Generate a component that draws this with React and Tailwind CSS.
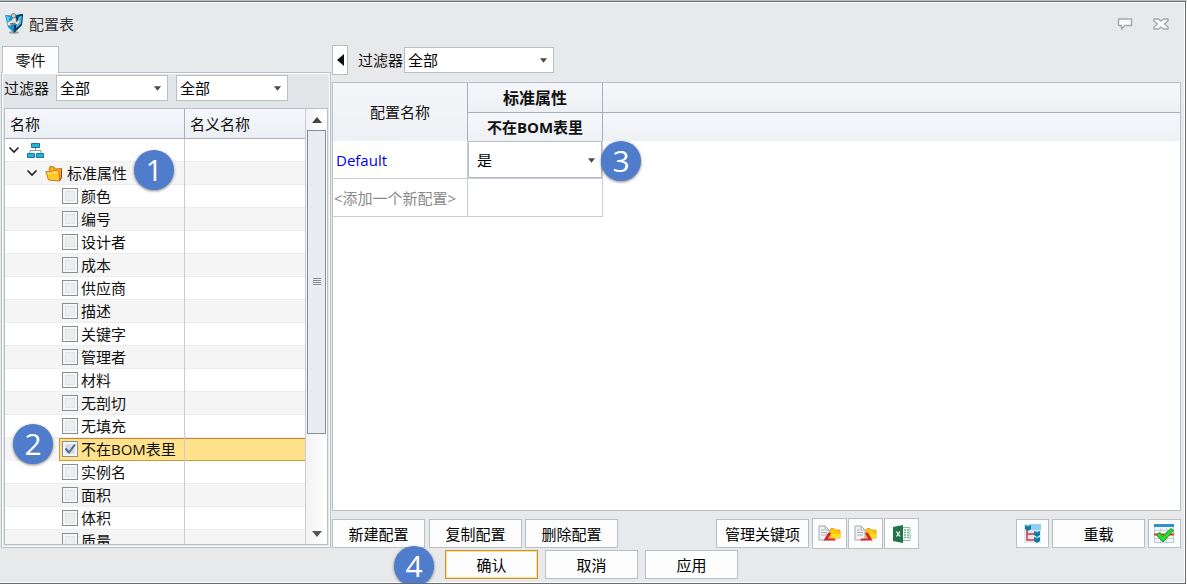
import { useState } from 'react';
import clsx from 'clsx';

const FONT = "font-['Open_Sans','Noto_Sans_CJK_SC',sans-serif]";

const ATRIBUTOS = [
  '颜色', '编号', '设计者', '成本', '供应商', '描述', '关键字', '管理者',
  '材料', '无剖切', '无填充', '不在BOM表里', '实例名', '面积', '体积', '质量',
];

function Badge({ children, className }) {
  return (
    <span className={clsx('absolute z-10 flex h-10 w-10 items-center justify-center rounded-full bg-[#4f7ccb] text-[30px] leading-none text-white shadow-[0_1px_3px_rgba(0,0,0,0.5)]', className)}>
      {children}
    </span>
  );
}

function Dropdown({ id, label, options, className, selectClass }) {
  return (
    <div className={clsx('relative', className)}>
      <select id={id} aria-label={label} className={clsx('h-full w-full appearance-none border border-[#b9bfc7] bg-white text-[15px] leading-5 text-black outline-none', selectClass)}>
        {options.map((o) => <option key={o}>{o}</option>)}
      </select>
      <svg className="pointer-events-none absolute right-[7px] top-1/2 -mt-0.5 h-[5px] w-[7px]" viewBox="0 0 8 5">
        <path d="M0 0h8L4 5z" fill="#4a4a4a" />
      </svg>
    </div>
  );
}

function PushButton({ children, className }) {
  return (
    <button className={clsx('h-[29px] w-[93px] border bg-[#fdfdfd] text-[15px] leading-5 text-black', className || 'border-[#b9bfc7]')}>
      {children}
    </button>
  );
}

function IconButton({ label, className, children }) {
  return (
    <button aria-label={label} className={clsx('flex items-center justify-center border border-[#b9bfc7] bg-[#fdfdfd]', className)}>
      {children}
    </button>
  );
}

/* ÍCONES */
function AppLogo() {
  return (
    <svg width="19" height="21" viewBox="0 0 19 21">
      <ellipse cx="9" cy="19.5" rx="5" ry="1.2" fill="#9aa0a5" />
      <path d="M0 2l6 .5L18 1l-1 11-8 8-6-6z" fill="#1590cc" />
      <path d="M12 2l6-1-1 11-8 8V9z" fill="#0b3a5c" />
      <path d="M14 3.500l3-.5-1 8-5 4v-4z" fill="#38c4f2" />
      <path d="M1 3l4 1-2 6z" fill="#58d0f5" />
      <path d="M3 9l4-2 1-3 3 1v4l5-3-3 6-5-1-4 2-2-2z" fill="#e5e8ea" stroke="#7c868e" strokeWidth=".6" />
      <path d="M5 11l4-1 3 2" fill="none" stroke="#51606b" />
      <circle cx="8.5" cy="2.800" r="2.200" fill="#c9cdd0" stroke="#606870" strokeWidth=".8" />
    </svg>
  );
}

function Chevron() {
  return (
    <svg width="12" height="8" viewBox="0 0 12 8" className="shrink-0">
      <path d="M1.500 1.500L6 6l4.500-4.500" fill="none" stroke="#222" strokeWidth="1.600" />
    </svg>
  );
}

function TreeRootIcon() {
  return (
    <svg width="19" height="17" viewBox="0 0 19 17" className="shrink-0">
      <path d="M9.500 6v3M4 11V8.500h11V11" fill="none" stroke="#8d9ca6" />
      <g fill="#23b3da" stroke="#167698">
        <path d="M5.500 1.500h8v4h-8zM1.500 11.500h7v4h-7zM10.500 11.500h7v4h-7z" />
      </g>
    </svg>
  );
}

function FolderIcon() {
  return (
    <svg width="18" height="17" viewBox="0 0 18 17" className="shrink-0">
      <path d="M4 5l1-3.500 4 .5 1 2 6.500-.5-.5 10-2 2z" fill="#f5b120" stroke="#c07a1c" />
      <path d="M.8 6.500L6 7l1.500-1.500L14 6l.5 10L3.500 15z" fill="#ffc928" stroke="#cf7a1f" />
      <path d="M2.500 8l4 .3L8 7l5 .3" fill="none" stroke="#ffeb8a" />
      <path d="M14.500 16l2-3.500V4" fill="none" stroke="#a83a20" />
    </svg>
  );
}

function FolderDocIcon({ flip }) {
  return (
    <svg width="23" height="17" viewBox="0 0 23 17">
      <path d="M1 1h6l4 4v10H1z" fill="#f1f2f3" stroke="#a4a8ac" />
      <path d="M7 1v4h4M3 5h3M3 7.500h6M3 10h6" fill="none" stroke="#aeb2b6" />
      <path d="M12 5l1-1.500h3l1 1.500h5v8H12z" fill="#fbc81a" stroke="#e9a510" />
      <path d="M13 9h9v4h-9z" fill="#ffe11a" />
      {flip
        ? <path d="M11 8l3-.5 4.500 8H6l1.500-2H14z" fill="#d8222c" />
        : <path d="M12 7.500l-2 .5-4.500 7.500H18l-1.500-2H10l3-5z" fill="#d8222c" />}
    </svg>
  );
}

function ExcelIcon() {
  return (
    <svg width="19" height="18" viewBox="0 0 19 18">
      <path d="M10 2.500h8v13h-8z" fill="#fff" stroke="#8fbda3" />
      <path d="M12 5h2M15 5h2M12 7.500h2M15 7.500h2M12 10h2M15 10h2M12 12.500h2M15 12.500h2" stroke="#6db08c" strokeWidth="1.300" />
      <path d="M1 2l10-2v18L1 16z" fill="#1f7346" />
      <path d="M4.500 6.500l3.500 5M8 6.500l-3.500 5" stroke="#fff" strokeWidth="1.300" />
    </svg>
  );
}

function StructureIcon() {
  return (
    <svg width="17" height="19" viewBox="0 0 17 19">
      <path d="M0 0h17v19H0z" fill="#d9e8f1" />
      <path d="M6 0h11v6H6z" fill="#8fd0f2" />
      <path d="M3 6v10h7M3 10h7" fill="none" stroke="#dc3541" strokeWidth="1.500" />
      <g fill="#17749a">
        <path d="M1 1l3 1 3-1v4L4 7 1 5z" />
        <path d="M10 7l3 1 3-1v4l-3 2-3-2z" />
        <path d="M10 13l3 1 3-1v4l-3 2-3-2z" />
      </g>
      <path d="M2 2h3M11 8h3M11 14h3" stroke="#4ab5dc" />
    </svg>
  );
}

function CheckTableIcon() {
  return (
    <svg width="21" height="21" viewBox="0 0 21 21">
      <path d="M.5 1.500h19v18H.5z" fill="#f4f7fa" stroke="#b8cbd9" />
      <path d="M0 1h20v3H0z" fill="#2f8fd0" />
      <path d="M1 7.500h18M1 15.500h18M6.500 5v14M12.500 5v14" stroke="#c3d3de" />
      <path d="M0 11.500h20" stroke="#d93a34" strokeWidth="2" />
      <path d="M2.500 12L5.500 9.500l3 4L17 5.500l2.500 2L9 19z" fill="#2fdb2f" stroke="#16961c" />
    </svg>
  );
}

function TreeRow({ index, children, selected }) {
  return (
    <tr className={clsx('h-[23px]', index % 2 ? 'bg-[#f5f5f5]' : 'bg-white')}>
      <td className="relative border-r border-[#c9ccd8] p-0">{children}</td>
      <td className={clsx('p-0', selected ? 'border-y border-t-[#cf8433] border-b-[#c59b3f] bg-[#ffe28b]' : 'border-b border-[#ececec]')} />
    </tr>
  );
}

function AttributePanel() {
  const [marcados, setMarcados] = useState({ 不在BOM表里: true });

  return (
    <section className="flex w-[330px] shrink-0 flex-col pb-px pt-px">
      <div className="flex pl-px">
        <button className="relative -mb-px h-[27px] w-[57px] border border-b-0 border-[#b9bfc7] bg-[#fdfdfd] text-[15px] leading-5">零件</button>
      </div>
      <div className="flex min-h-0 flex-1 flex-col border border-[#b9bfc7] bg-white p-px">
        <div className="flex min-h-0 flex-1 flex-col bg-[#e2e5e8] px-px pb-px">
          <div className="flex h-[34px] items-start pt-px">
            <label htmlFor="filtro-tipo" className="w-[52px] pt-0.5 text-[15px] leading-[22px]">过滤器</label>
            <Dropdown id="filtro-tipo" options={['全部']} className="h-[26px] w-[112px]" selectClass="pl-[3px]" />
            <Dropdown label="过滤器" options={['全部']} className="ml-2 h-[26px] w-[112px]" selectClass="pl-[3px]" />
          </div>

          <div className="flex min-h-0 flex-1 overflow-hidden border border-[#b9bfc7] bg-white">
            <div className="min-w-0 flex-1 overflow-hidden border-r border-[#c9ccd8]">
              <table className="w-full table-fixed border-separate border-spacing-0 text-[15px] leading-[22px]">
                <thead>
                  <tr className="h-[30px] bg-gradient-to-b from-[#f5f7fb] to-[#ebeff3] text-left">
                    <th className="w-3/5 border-b border-r border-[#a9afbb] p-0 pl-[5px] font-normal">名称</th>
                    <th className="border-b border-[#a9afbb] p-0 pl-[5px] font-normal">名义名称</th>
                  </tr>
                </thead>
                <tbody>
                  <TreeRow index={0}>
                    <div className="flex h-[23px] items-center gap-1.5 border-b border-[#ececec] pl-[3px]">
                      <Chevron /><TreeRootIcon />
                    </div>
                  </TreeRow>
                  <TreeRow index={1}>
                    <div className="flex h-[23px] items-center gap-[7px] border-b border-[#ececec] pl-[21px]">
                      <Chevron />
                      <span className="flex items-center gap-1"><FolderIcon />标准属性</span>
                    </div>
                    <Badge className="-top-3 left-[129px]">1</Badge>
                  </TreeRow>
                  {ATRIBUTOS.map((nome, i) => {
                    const selected = nome === '不在BOM表里';
                    return (
                      <TreeRow key={nome} index={i} selected={selected}>
                        <div className={clsx('h-[23px] pl-[54px]', !selected && 'border-b border-[#ececec]')}>
                          <label className={clsx('flex items-center gap-[3px]', selected ? 'h-[23px] border-y border-l border-t-[#cf8433] border-b-[#c59b3f] border-l-[#c59b3f] bg-[#ffe28b] pb-px pl-0.5' : 'h-[22px] pl-[3px]')}>
                            <span className="relative flex h-4 w-4 shrink-0">
                              <input
                                type="checkbox"
                                checked={!!marcados[nome]}
                                onChange={() => setMarcados({ ...marcados, [nome]: !marcados[nome] })}
                                className="h-4 w-4 appearance-none border border-[#8c8f92] bg-[#eceeef] shadow-[inset_0_0_0_2px_#f6f6f7,inset_0_0_0_3px_#e0e3e6] checked:bg-[#d5dbe3]"
                              />
                              {marcados[nome] && (
                                <svg className="pointer-events-none absolute inset-0" width="16" height="16" viewBox="0 0 16 16">
                                  <path d="M3.500 7.500l3.500 4L13 3.500" fill="none" stroke="#4b6a92" strokeWidth="2" />
                                </svg>
                              )}
                            </span>
                            {nome}
                          </label>
                        </div>
                        {selected && <Badge className="-top-3.5 left-2">2</Badge>}
                      </TreeRow>
                    );
                  })}
                </tbody>
              </table>
            </div>

            {/* BARRA DE ROLAGEM */}
            <div className="flex w-[21px] flex-col items-center bg-gradient-to-r from-[#f3f3f4] to-white">
              <div className="flex h-[21px] items-center"><svg width="10" height="6" viewBox="0 0 10 6"><path d="M5 0l5 6H0z" fill="#444" /></svg></div>
              <div className="flex w-[19px] flex-[304] items-center justify-center border border-[#868c96] bg-[#e9ecf1]">
                <svg width="8" height="8" viewBox="0 0 8 8"><path d="M0 .5h8M0 2.500h8M0 4.500h8M0 6.500h8" stroke="#858a93" /></svg>
              </div>
              <div className="flex-[91]" />
              <div className="flex h-5 items-center"><svg width="10" height="6" viewBox="0 0 10 6"><path d="M0 0h10L5 6z" fill="#555" /></svg></div>
            </div>
          </div>
        </div>
      </div>
    </section>
  );
}

function ConfigPanel() {
  return (
    <section className="flex min-w-0 flex-1 flex-col">
      <div className="flex h-[37px] items-start">
        <button aria-label="折叠" className="flex h-[30px] w-4 items-center justify-center border border-[#b9bfc7] bg-white">
          <svg width="7" height="12" viewBox="0 0 7 12"><path d="M7 0v12L0 6z" fill="#111" /></svg>
        </button>
        <label htmlFor="filtro-config" className="ml-2.5 mt-1 w-[46px] text-[15px] leading-[22px]">过滤器</label>
        <Dropdown id="filtro-config" options={['全部']} className="mt-0.5 h-[26px] w-[150px]" selectClass="pl-[3px]" />
      </div>

      <div className="min-h-0 flex-1 overflow-hidden border border-[#b9bfc7] bg-white">
        <table className="w-full table-fixed border-separate border-spacing-0 text-[15px] leading-[22px]">
          <colgroup>
            <col className="w-[135px]" />
            <col className="w-[135px]" />
            <col />
          </colgroup>
          <thead>
            <tr className="h-[30px] bg-gradient-to-b from-[#f5f6fa] to-[#eef1f4]">
              <th rowSpan={2} className="border-r border-[#a9afbb] bg-gradient-to-b from-[#f5f6fa] to-[#eef1f4] p-0 font-normal">配置名称</th>
              <th className="border-b border-r border-[#a9afbb] p-0 text-base leading-[22px] font-bold">标准属性</th>
              <td className="border-b border-[#a9afbb] p-0" />
            </tr>
            <tr className="h-7 bg-gradient-to-b from-[#f5f6fa] to-[#eef1f4]">
              <th className="border-r border-[#a9afbb] p-0 text-[15px] font-bold">不在BOM表里</th>
              <td className="p-0" />
            </tr>
          </thead>
          <tbody>
            <tr className="h-[38px]">
              <td className="border-b border-r border-[#c9ccd8] p-0 pl-[3px] text-[#0000f5]">Default</td>
              <td className="relative border-r border-b border-[#c9ccd8] p-0">
                <Dropdown label="不在BOM表里" options={['是', '否']} className="h-[37px]" selectClass="pl-2" />
                <Badge className="left-[133px] top-0">3</Badge>
              </td>
              <td />
            </tr>
            <tr className="h-[38px]">
              <td className="border-b border-r border-[#c9ccd8] p-0 pl-px whitespace-nowrap text-[#8a8a8a]">&lt;添加一个新配置&gt;</td>
              <td className="border-b border-r border-[#c9ccd8] p-0" />
              <td />
            </tr>
          </tbody>
        </table>
      </div>

      <div className="mt-[7px] flex h-[31px] items-center gap-[3px]">
        <PushButton>新建配置</PushButton>
        <PushButton className="ml-px border-[#b9bfc7]">复制配置</PushButton>
        <PushButton>删除配置</PushButton>
        <div className="ml-[95px] flex items-center gap-px">
          <PushButton className="mr-0.5 border-[#b9bfc7]">管理关键项</PushButton>
          <IconButton label="导入" className="h-[31px] w-[35px]"><FolderDocIcon /></IconButton>
          <IconButton label="导出" className="h-[31px] w-[35px]"><FolderDocIcon flip /></IconButton>
          <IconButton label="Excel" className="h-[31px] w-[35px]"><ExcelIcon /></IconButton>
        </div>
        <div className="ml-auto flex items-center gap-[3px]">
          <IconButton label="结构" className="h-[29px] w-[33px]"><StructureIcon /></IconButton>
          <PushButton>重载</PushButton>
          <IconButton label="检查" className="h-[29px] w-[33px]"><CheckTableIcon /></IconButton>
        </div>
      </div>
    </section>
  );
}

export default function ConfigTableDialog() {
  return (
    <div className={clsx('h-screen border-t border-[#b9c0c5] bg-white pr-px text-[#111]', FONT)}>
      <div className="flex h-full flex-col overflow-hidden border-y border-r border-[#676c70] bg-[#e8e9eb] shadow-[inset_-1px_0_0_#fff,inset_0_1px_0_#fff,inset_0_-1px_0_#fff]">

        {/* TÍTULO */}
        <header className="flex h-[43px] shrink-0 items-center gap-[5px] pl-[5px] pr-4">
          <AppLogo />
          <h1 className="text-[15px] leading-[22px] text-[#333]">配置表</h1>
          <div className="ml-auto flex items-center gap-5">
            <button aria-label="反馈">
              <svg width="16" height="12" viewBox="0 0 16 12">
                <path d="M1.500 1h13v6.500H8L4.500 11V7.500h-3z" fill="#fafafa" stroke="#a5a7aa" strokeWidth="1.500" strokeLinejoin="round" />
              </svg>
            </button>
            <button aria-label="关闭">
              <svg width="16" height="12" viewBox="0 0 16 12">
                <path d="M1 1h4.500L8 3l2.500-2H15v2l-3.500 3L15 9v2h-4.500L8 9l-2.500 2H1V9l3.500-3L1 3z" fill="#fafafa" stroke="#a5a7aa" strokeWidth="1.400" strokeLinejoin="round" />
              </svg>
            </button>
          </div>
        </header>

        <main className="flex min-h-0 flex-1 gap-px pl-px pr-1">
          <AttributePanel />
          <ConfigPanel />
        </main>

        {/* AÇÕES */}
        <footer className="mt-px flex shrink-0 justify-center gap-[7px] pb-1 pr-0.5">
          <div className="relative">
            <Badge className="-left-[51px] -top-1">4</Badge>
            <PushButton className="border-[#c8923a] shadow-[inset_0_0_0_1px_#ffe08a]">确认</PushButton>
          </div>
          <PushButton>取消</PushButton>
          <PushButton>应用</PushButton>
        </footer>
      </div>
    </div>
  );
}
